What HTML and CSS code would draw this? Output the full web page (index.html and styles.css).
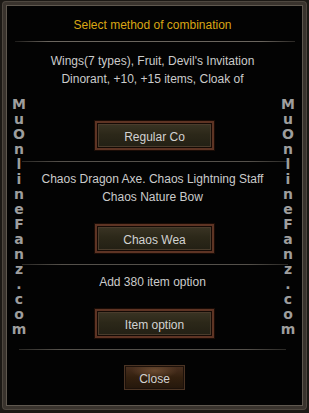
FILE: index.html
```html
<html>
<head>
    <title>Chaos Machine</title>
    <link rel="stylesheet" href="styles.css">
</head>
<body>

<div class="frame">
    <p class="title">Select method of combination</p>
    <div class="rule top-rule"></div>

    <p class="text first">Wings(7 types), Fruit, Devil's Invitation<br>Dinorant, +10, +15 items, Cloak of</p>
    <div class="button big first-btn">Regular Co</div>
    <div class="rule"></div>

    <p class="text">Chaos Dragon Axe. Chaos Lightning Staff<br>Chaos Nature Bow</p>
    <div class="button big">Chaos Wea</div>
    <div class="rule"></div>

    <p class="text">Add 380 item option</p>
    <div class="button big">Item option</div>
    <div class="rule bottom-rule"></div>

    <div class="button close">Close</div>
</div>

<div class="watermark left">M<br>u<br>O<br>n<br>l<br>i<br>n<br>e<br>F<br>a<br>n<br>z<br>.<br>c<br>o<br>m</div>
<div class="watermark right">M<br>u<br>O<br>n<br>l<br>i<br>n<br>e<br>F<br>a<br>n<br>z<br>.<br>c<br>o<br>m</div>

</body>
</html>
```

FILE: styles.css
```css
body {
    margin: 0;
    background: #1c1915;
    font-family: "Liberation Sans", Arial, sans-serif;
    font-size: 12px;
    position: relative;
    height: 413px;
    overflow: hidden;
}
.frame {
    margin: 2px 3px 0 3px;
    height: 407px;
    box-sizing: border-box;
    border: 3px solid #39332d;
    box-shadow: inset 0 0 0 1px #5f584f, 0 0 0 1px #4e473f;
    border-radius: 3px;
    background: #030303;
    display: flex;
    flex-direction: column;
    align-items: center;
}
.title {
    margin: 11px 0 0 0;
    line-height: 18px;
    color: #d9a614;
    padding-right: 4px;
}
.rule {
    align-self: stretch;
    height: 1px;
    margin: 11px 15px 0 16px;
    background: linear-gradient(to right, #2a2825, #55514b 15%, #55514b 85%, #2a2825);
}
.top-rule {
    margin: 7px 8px 0 9px;
    background: linear-gradient(to right, #1e1c1a, #6a655e 12%, #6a655e 88%, #2a2724);
}
.bottom-rule {
    margin: 11px 17px 0 13px;
}
.text {
    margin: 8px 0 0 0;
    line-height: 18px;
    color: #cbcbcb;
    text-align: center;
    padding-right: 4px;
}
.text.first {
    margin-top: 10px;
}
.button {
    box-sizing: border-box;
    color: #d2d2d2;
    text-align: center;
}
.big {
    width: 119px;
    height: 29px;
    line-height: 23px;
    margin-top: 18px;
    border: 2px solid #5e3424;
    box-shadow: inset 0 0 0 1px #140a05, inset 0 0 0 2px #4a3c2c, 0 0 0 1px #1a0c06;
    background: linear-gradient(#3b3525, #2c2819 45%, #221f14);
    padding-top: 3px;
}
.first-btn {
    margin-top: 33px;
}
.close {
    width: 61px;
    height: 25px;
    line-height: 21px;
    margin-top: 15px;
    padding-top: 3px;
    border: 1px solid #4b3424;
    box-shadow: inset 0 0 0 1px #1c110a;
    background: radial-gradient(ellipse 40% 35% at 50% 20%, #6a4a30, transparent),
        linear-gradient(#4a3020, #33200f 50%, #24170c);
}
.watermark {
    position: absolute;
    top: 97px;
    width: 20px;
    font-family: "DejaVu Sans", Verdana, sans-serif;
    font-weight: bold;
    font-size: 14px;
    line-height: 15px;
    color: #9e9e9e;
    text-align: center;
}
.watermark.left {
    left: 9px;
}
.watermark.right {
    left: 278px;
}
```
